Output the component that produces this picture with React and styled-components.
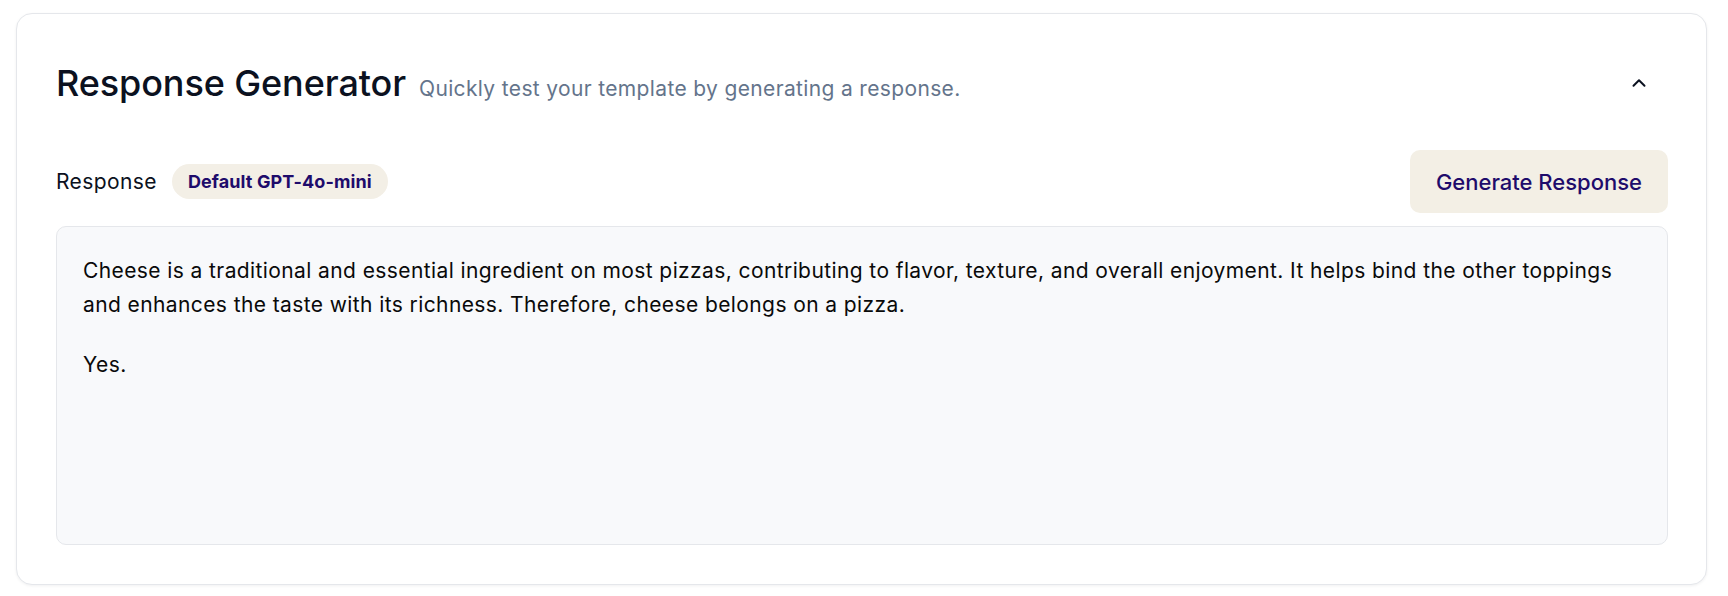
import React from "react";
import styled, { createGlobalStyle } from "styled-components";
import { ChevronUp } from "lucide-react";

const GlobalStyle = createGlobalStyle`
  body {
    margin: 0;
    background: #ffffff;
    font-family: Inter, "Noto Sans", sans-serif;
    color: #0f172a;
  }
`;

const Page = styled.div`
  padding: 13px 21px 12px 16px;
`;

const Card = styled.section`
  border: 1px solid #e5e7eb;
  border-radius: 16px;
  background: #ffffff;
  box-shadow: 0 1px 3px rgba(15, 23, 42, 0.06);
  padding: 39px 38px 39px 39px;
`;

const Header = styled.div`
  display: flex;
  align-items: center;
  justify-content: space-between;
  height: 60px;
  margin-bottom: 37px;
`;

const TitleGroup = styled.div`
  display: flex;
  align-items: baseline;
  gap: 13px;
`;

const Title = styled.h2`
  margin: 0;
  font-size: 36px;
  font-weight: 500;
  letter-spacing: -0.1px;
  color: #0b1120;
`;

const Subtitle = styled.span`
  font-size: 21px;
  letter-spacing: 0.35px;
  color: #64748b;
`;

const CollapseButton = styled.button`
  display: flex;
  align-items: center;
  justify-content: center;
  width: 40px;
  height: 40px;
  margin-right: 9px;
  border: none;
  background: transparent;
  color: #0b1120;
  cursor: pointer;
  padding: 0;
`;

const Toolbar = styled.div`
  display: flex;
  align-items: center;
  justify-content: space-between;
  margin-bottom: 13px;
`;

const LabelGroup = styled.div`
  display: flex;
  align-items: center;
  gap: 15px;
`;

const Label = styled.span`
  font-size: 21px;
  letter-spacing: 0.4px;
  color: #0b1120;
`;

const Badge = styled.span`
  display: inline-flex;
  align-items: center;
  height: 35px;
  padding: 0 16px;
  border-radius: 999px;
  background: #f3efe6;
  color: #1e0b6b;
  font-size: 18px;
  font-weight: 700;
  letter-spacing: 0.1px;
`;

const GenerateButton = styled.button`
  height: 63px;
  padding: 0 26px;
  border: none;
  border-radius: 10px;
  background: #f3efe5;
  color: #1e0b6b;
  font-family: inherit;
  font-size: 22px;
  font-weight: 500;
  cursor: pointer;
`;

const ResponseBox = styled.div`
  height: 319px;
  box-sizing: border-box;
  border: 1px solid #e5e7eb;
  border-radius: 10px;
  background: #f8f9fb;
  padding: 27px 26px;
  font-size: 21px;
  line-height: 34px;
  letter-spacing: 0.4px;
  color: #0a0a0a;
`;

const Paragraph = styled.p`
  margin: 0 0 26px;
`;

export default function App() {
  return (
    <>
      <GlobalStyle />
      <Page>
        <Card>
          <Header>
            <TitleGroup>
              <Title>Response Generator</Title>
              <Subtitle>Quickly test your template by generating a response.</Subtitle>
            </TitleGroup>
            <CollapseButton aria-label="Collapse">
              <ChevronUp size={22} strokeWidth={2.2} />
            </CollapseButton>
          </Header>
          <Toolbar>
            <LabelGroup>
              <Label>Response</Label>
              <Badge>Default GPT-4o-mini</Badge>
            </LabelGroup>
            <GenerateButton>Generate Response</GenerateButton>
          </Toolbar>
          <ResponseBox>
            <Paragraph>
              Cheese is a traditional and essential ingredient on most pizzas, contributing to flavor,
              texture, and overall enjoyment. It helps bind the other toppings and enhances the taste
              with its richness. Therefore, cheese belongs on a pizza.
            </Paragraph>
            <Paragraph>Yes.</Paragraph>
          </ResponseBox>
        </Card>
      </Page>
    </>
  );
}
